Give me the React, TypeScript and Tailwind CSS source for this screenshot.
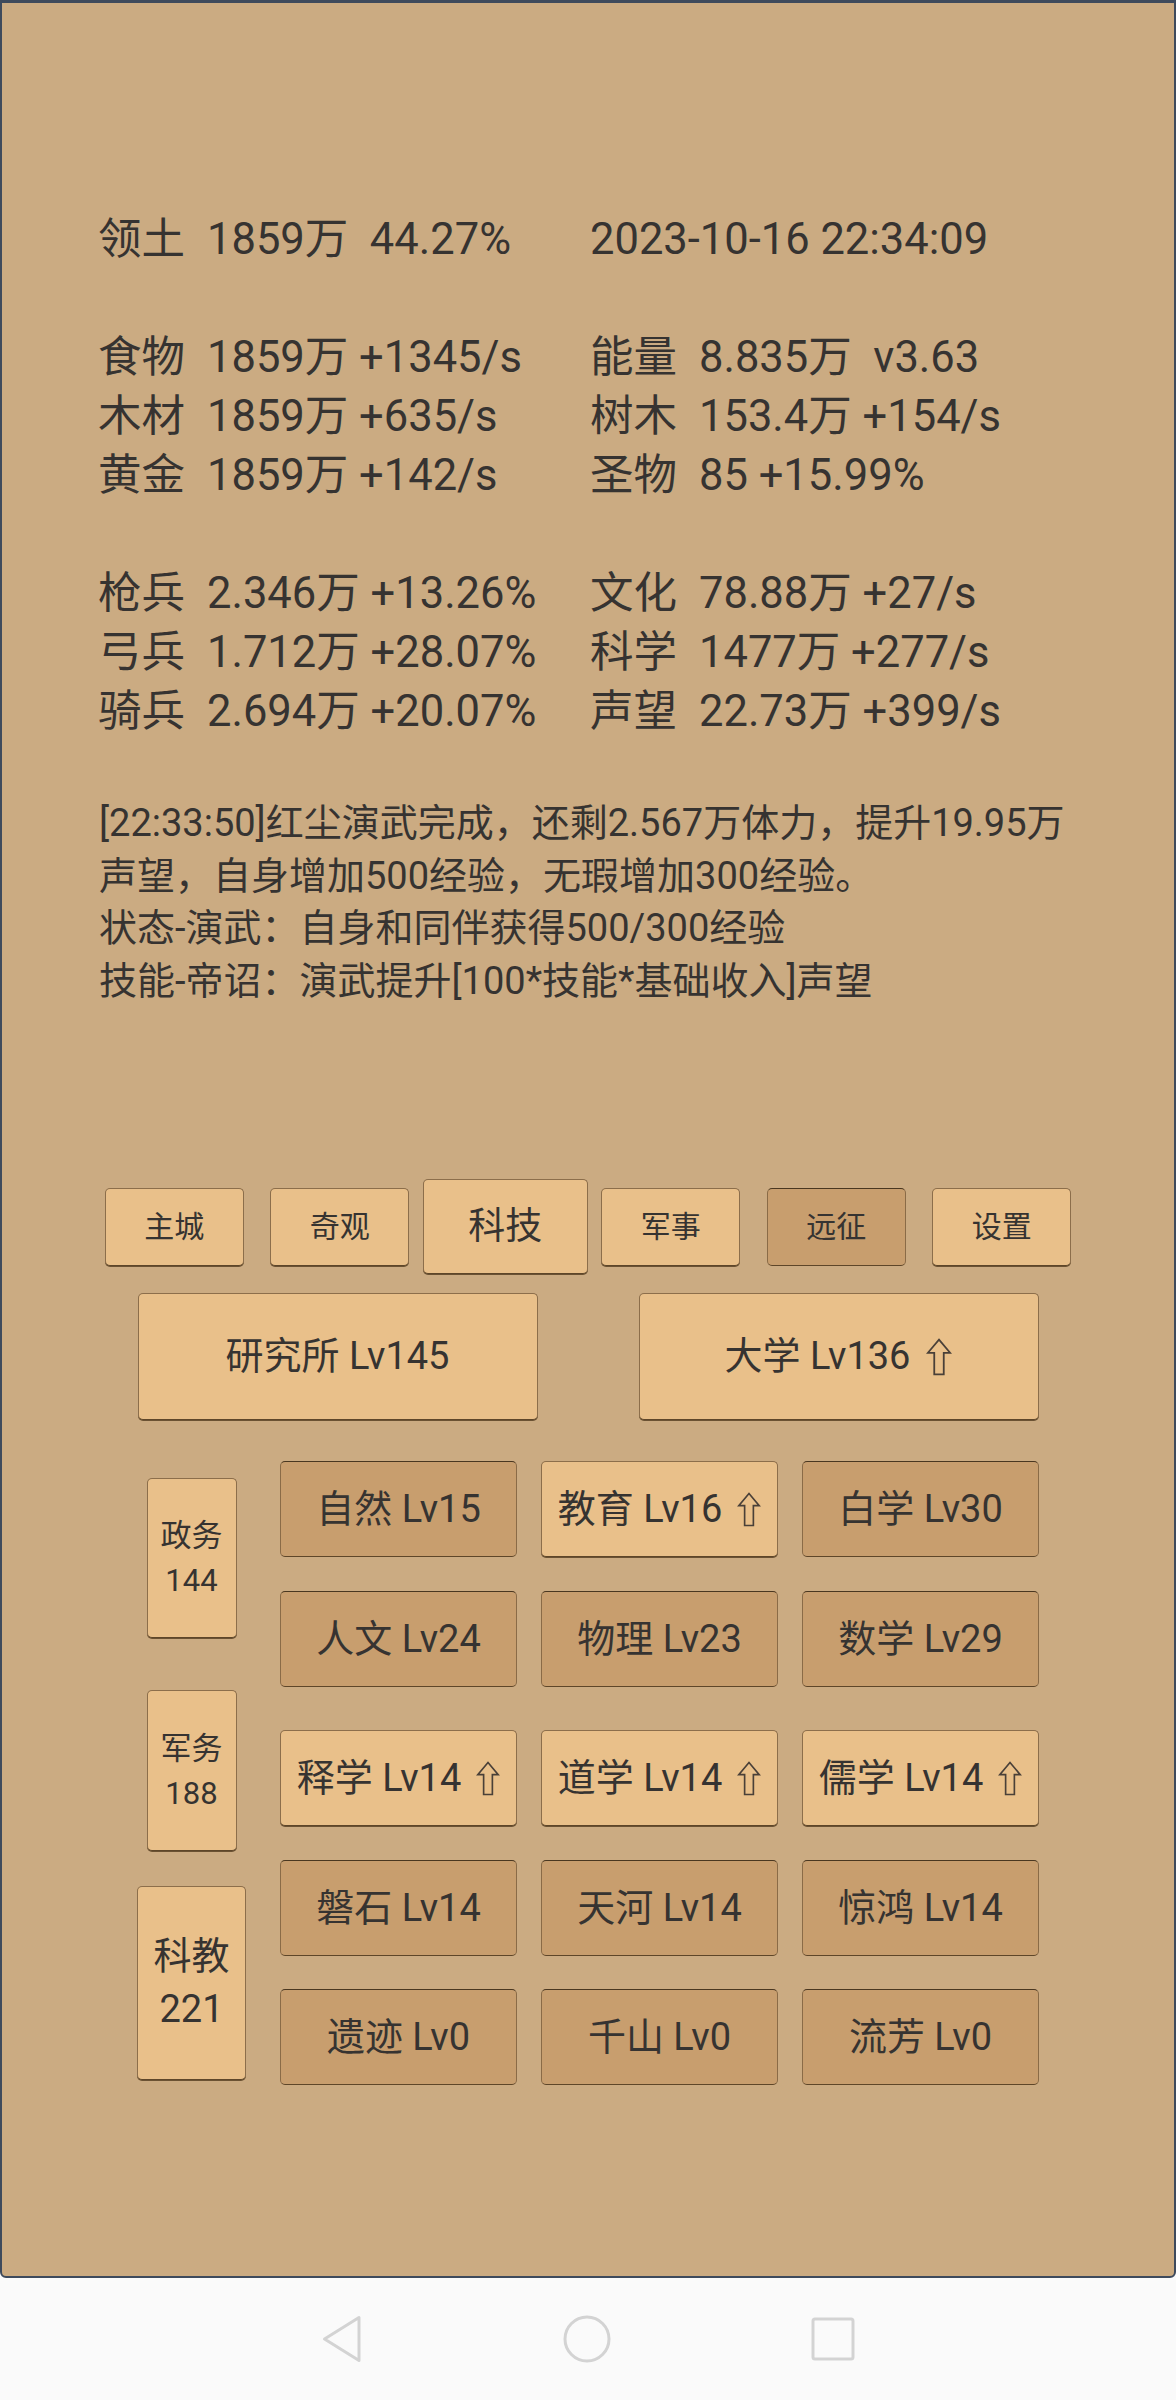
import React from "react";

const FONT = 'Roboto, "Noto Sans CJK SC", "Noto Sans", sans-serif';

type Stat = { label: string; value: string };

const STATS: ([Stat, Stat] | null)[] = [
  [
    { label: "领土", value: "1859万  44.27%" },
    { label: "", value: "2023-10-16 22:34:09" },
  ],
  null,
  [
    { label: "食物", value: "1859万 +1345/s" },
    { label: "能量", value: "8.835万  v3.63" },
  ],
  [
    { label: "木材", value: "1859万 +635/s" },
    { label: "树木", value: "153.4万 +154/s" },
  ],
  [
    { label: "黄金", value: "1859万 +142/s" },
    { label: "圣物", value: "85 +15.99%" },
  ],
  null,
  [
    { label: "枪兵", value: "2.346万 +13.26%" },
    { label: "文化", value: "78.88万 +27/s" },
  ],
  [
    { label: "弓兵", value: "1.712万 +28.07%" },
    { label: "科学", value: "1477万 +277/s" },
  ],
  [
    { label: "骑兵", value: "2.694万 +20.07%" },
    { label: "声望", value: "22.73万 +399/s" },
  ],
];

const LOG = [
  "[22:33:50]红尘演武完成，还剩2.567万体力，提升19.95万",
  "声望，自身增加500经验，无瑕增加300经验。",
  "状态-演武：自身和同伴获得500/300经验",
  "技能-帝诏：演武提升[100*技能*基础收入]声望",
];

const TABS = [
  { name: "主城" },
  { name: "奇观" },
  { name: "科技", active: true },
  { name: "军事" },
  { name: "远征", dark: true },
  { name: "设置" },
];

type Tech = { name: string; lv: number; up?: boolean };

const TECH_ROWS: { mt: string; items: Tech[] }[] = [
  {
    mt: "mt-0",
    items: [
      { name: "自然", lv: 15 },
      { name: "教育", lv: 16, up: true },
      { name: "白学", lv: 30 },
    ],
  },
  {
    mt: "mt-[34px]",
    items: [
      { name: "人文", lv: 24 },
      { name: "物理", lv: 23 },
      { name: "数学", lv: 29 },
    ],
  },
  {
    mt: "mt-[43px]",
    items: [
      { name: "释学", lv: 14, up: true },
      { name: "道学", lv: 14, up: true },
      { name: "儒学", lv: 14, up: true },
    ],
  },
  {
    mt: "mt-[34px]",
    items: [
      { name: "磐石", lv: 14 },
      { name: "天河", lv: 14 },
      { name: "惊鸿", lv: 14 },
    ],
  },
  {
    mt: "mt-[33px]",
    items: [
      { name: "遗迹", lv: 0 },
      { name: "千山", lv: 0 },
      { name: "流芳", lv: 0 },
    ],
  },
];

// outlined "upgrade" arrow next to a level
function UpArrow({ big }: { big?: boolean }) {
  return (
    <svg
      viewBox="0 0 24 36"
      className={big ? "ml-[16px] h-[38px] w-[26px]" : "ml-[15px] h-[35px] w-[24px]"}
      fill="none"
      stroke="#4a4038"
      strokeWidth={1.7}
      strokeLinejoin="miter"
    >
      <path d="M12 1.5 L22.5 14 L16.5 14 L16.5 34.5 L7.5 34.5 L7.5 14 L1.5 14 Z" />
    </svg>
  );
}

function Btn({
  light,
  className,
  children,
}: {
  light?: boolean;
  className?: string;
  children: React.ReactNode;
}) {
  return (
    <div
      className={
        "flex items-center justify-center rounded-[5px] border text-[#363331] " +
        (light
          ? "bg-[#e9c08a] border-[#8c6e4b] border-b-[#5e4629] shadow-[0_1px_0_#6b5233]"
          : "bg-[#c89e6e] border-[#8a6b47] border-t-[#4a3720] border-b-[#5e4629]") +
        " " +
        (className ?? "")
      }
    >
      {children}
    </div>
  );
}

function NavBar() {
  return (
    <div className="flex h-[122px] items-center justify-center gap-[200px] bg-[#fafafa]">
      <svg viewBox="0 0 42 48" className="h-[48px] w-[42px]" fill="none" stroke="#d3d3d3" strokeWidth={3} strokeLinejoin="round">
        <path d="M38 2.5 L38 45.5 L3.5 24 Z" />
      </svg>
      <svg viewBox="0 0 48 48" className="h-[48px] w-[48px]" fill="none" stroke="#d3d3d3" strokeWidth={3}>
        <circle cx="24" cy="24" r="22" />
      </svg>
      <svg viewBox="0 0 44 44" className="h-[44px] w-[44px]" fill="none" stroke="#d3d3d3" strokeWidth={3}>
        <rect x="2" y="2" width="40" height="40" rx="2" />
      </svg>
    </div>
  );
}

export default function App() {
  return (
    <div className="flex h-[2400px] w-[1176px] flex-col bg-[#fafafa]" style={{ fontFamily: FONT }}>
      <div className="box-border h-[2278px] rounded-b-[6px] border-2 border-t-[3px] border-[#3e4a5c] bg-[#cbab82] text-[#363331]">
        {/* stats */}
        <div className="pl-[96px] pt-[207px] text-[43.5px] leading-[59px]">
          {STATS.map((row, i) =>
            row ? (
              <div key={i} className="flex">
                {row.map((s, j) => (
                  <div key={j} className={"flex " + (j === 0 ? "w-[492px]" : "")}>
                    {s.label && <span className="w-[109px] shrink-0">{s.label}</span>}
                    <span className="whitespace-pre">{s.value}</span>
                  </div>
                ))}
              </div>
            ) : (
              <div key={i} className="h-[59px]" />
            )
          )}
        </div>

        {/* log */}
        <div className="mt-[56px] pl-[97px] text-[38px] leading-[52.5px]">
          {LOG.map((l, i) => (
            <div key={i} className="whitespace-nowrap">
              {l}
            </div>
          ))}
        </div>

        {/* tabs */}
        <div className="mx-auto mt-[172px] flex w-[993px]">
          {TABS.map((t) => (
            <div key={t.name} className="flex h-[95px] flex-1 items-center justify-center">
              {t.active ? (
                <Btn light className="h-[95px] w-full text-[37px]">
                  {t.name}
                </Btn>
              ) : (
                <Btn light={!t.dark} className="h-[78px] w-[139px] text-[30px]">
                  {t.name}
                </Btn>
              )}
            </div>
          ))}
        </div>

        {/* buildings */}
        <div className="mt-[19px] flex justify-center gap-[101px]">
          <Btn light className="h-[127px] w-[400px] text-[38px]">
            研究所 Lv145
          </Btn>
          <Btn light className="h-[127px] w-[400px] text-[38px]">
            大学 Lv136
            <UpArrow big />
          </Btn>
        </div>

        {/* tech grid */}
        <div className="mt-[41px] flex justify-center gap-[34px]">
          <div className="flex w-[109px] flex-col items-center">
            <Btn light className="mt-[17px] h-[160px] w-[90px] flex-col text-[31px] leading-[45px]">
              <span>政务</span>
              <span>144</span>
            </Btn>
            <Btn light className="mt-[52px] h-[161px] w-[90px] flex-col text-[31px] leading-[45px]">
              <span>军务</span>
              <span>188</span>
            </Btn>
            <Btn light className="mt-[35px] h-[194px] w-[109px] flex-col text-[38px] leading-[53px]">
              <span>科教</span>
              <span>221</span>
            </Btn>
          </div>
          <div className="flex w-[759px] flex-col">
            {TECH_ROWS.map((r, i) => (
              <div key={i} className={"grid grid-cols-3 gap-x-[24px] " + r.mt}>
                {r.items.map((t) => (
                  <Btn key={t.name} light={t.up} className="h-[96px] text-[38px]">
                    {t.name} Lv{t.lv}
                    {t.up && <UpArrow />}
                  </Btn>
                ))}
              </div>
            ))}
          </div>
        </div>
      </div>
      <NavBar />
    </div>
  );
}
